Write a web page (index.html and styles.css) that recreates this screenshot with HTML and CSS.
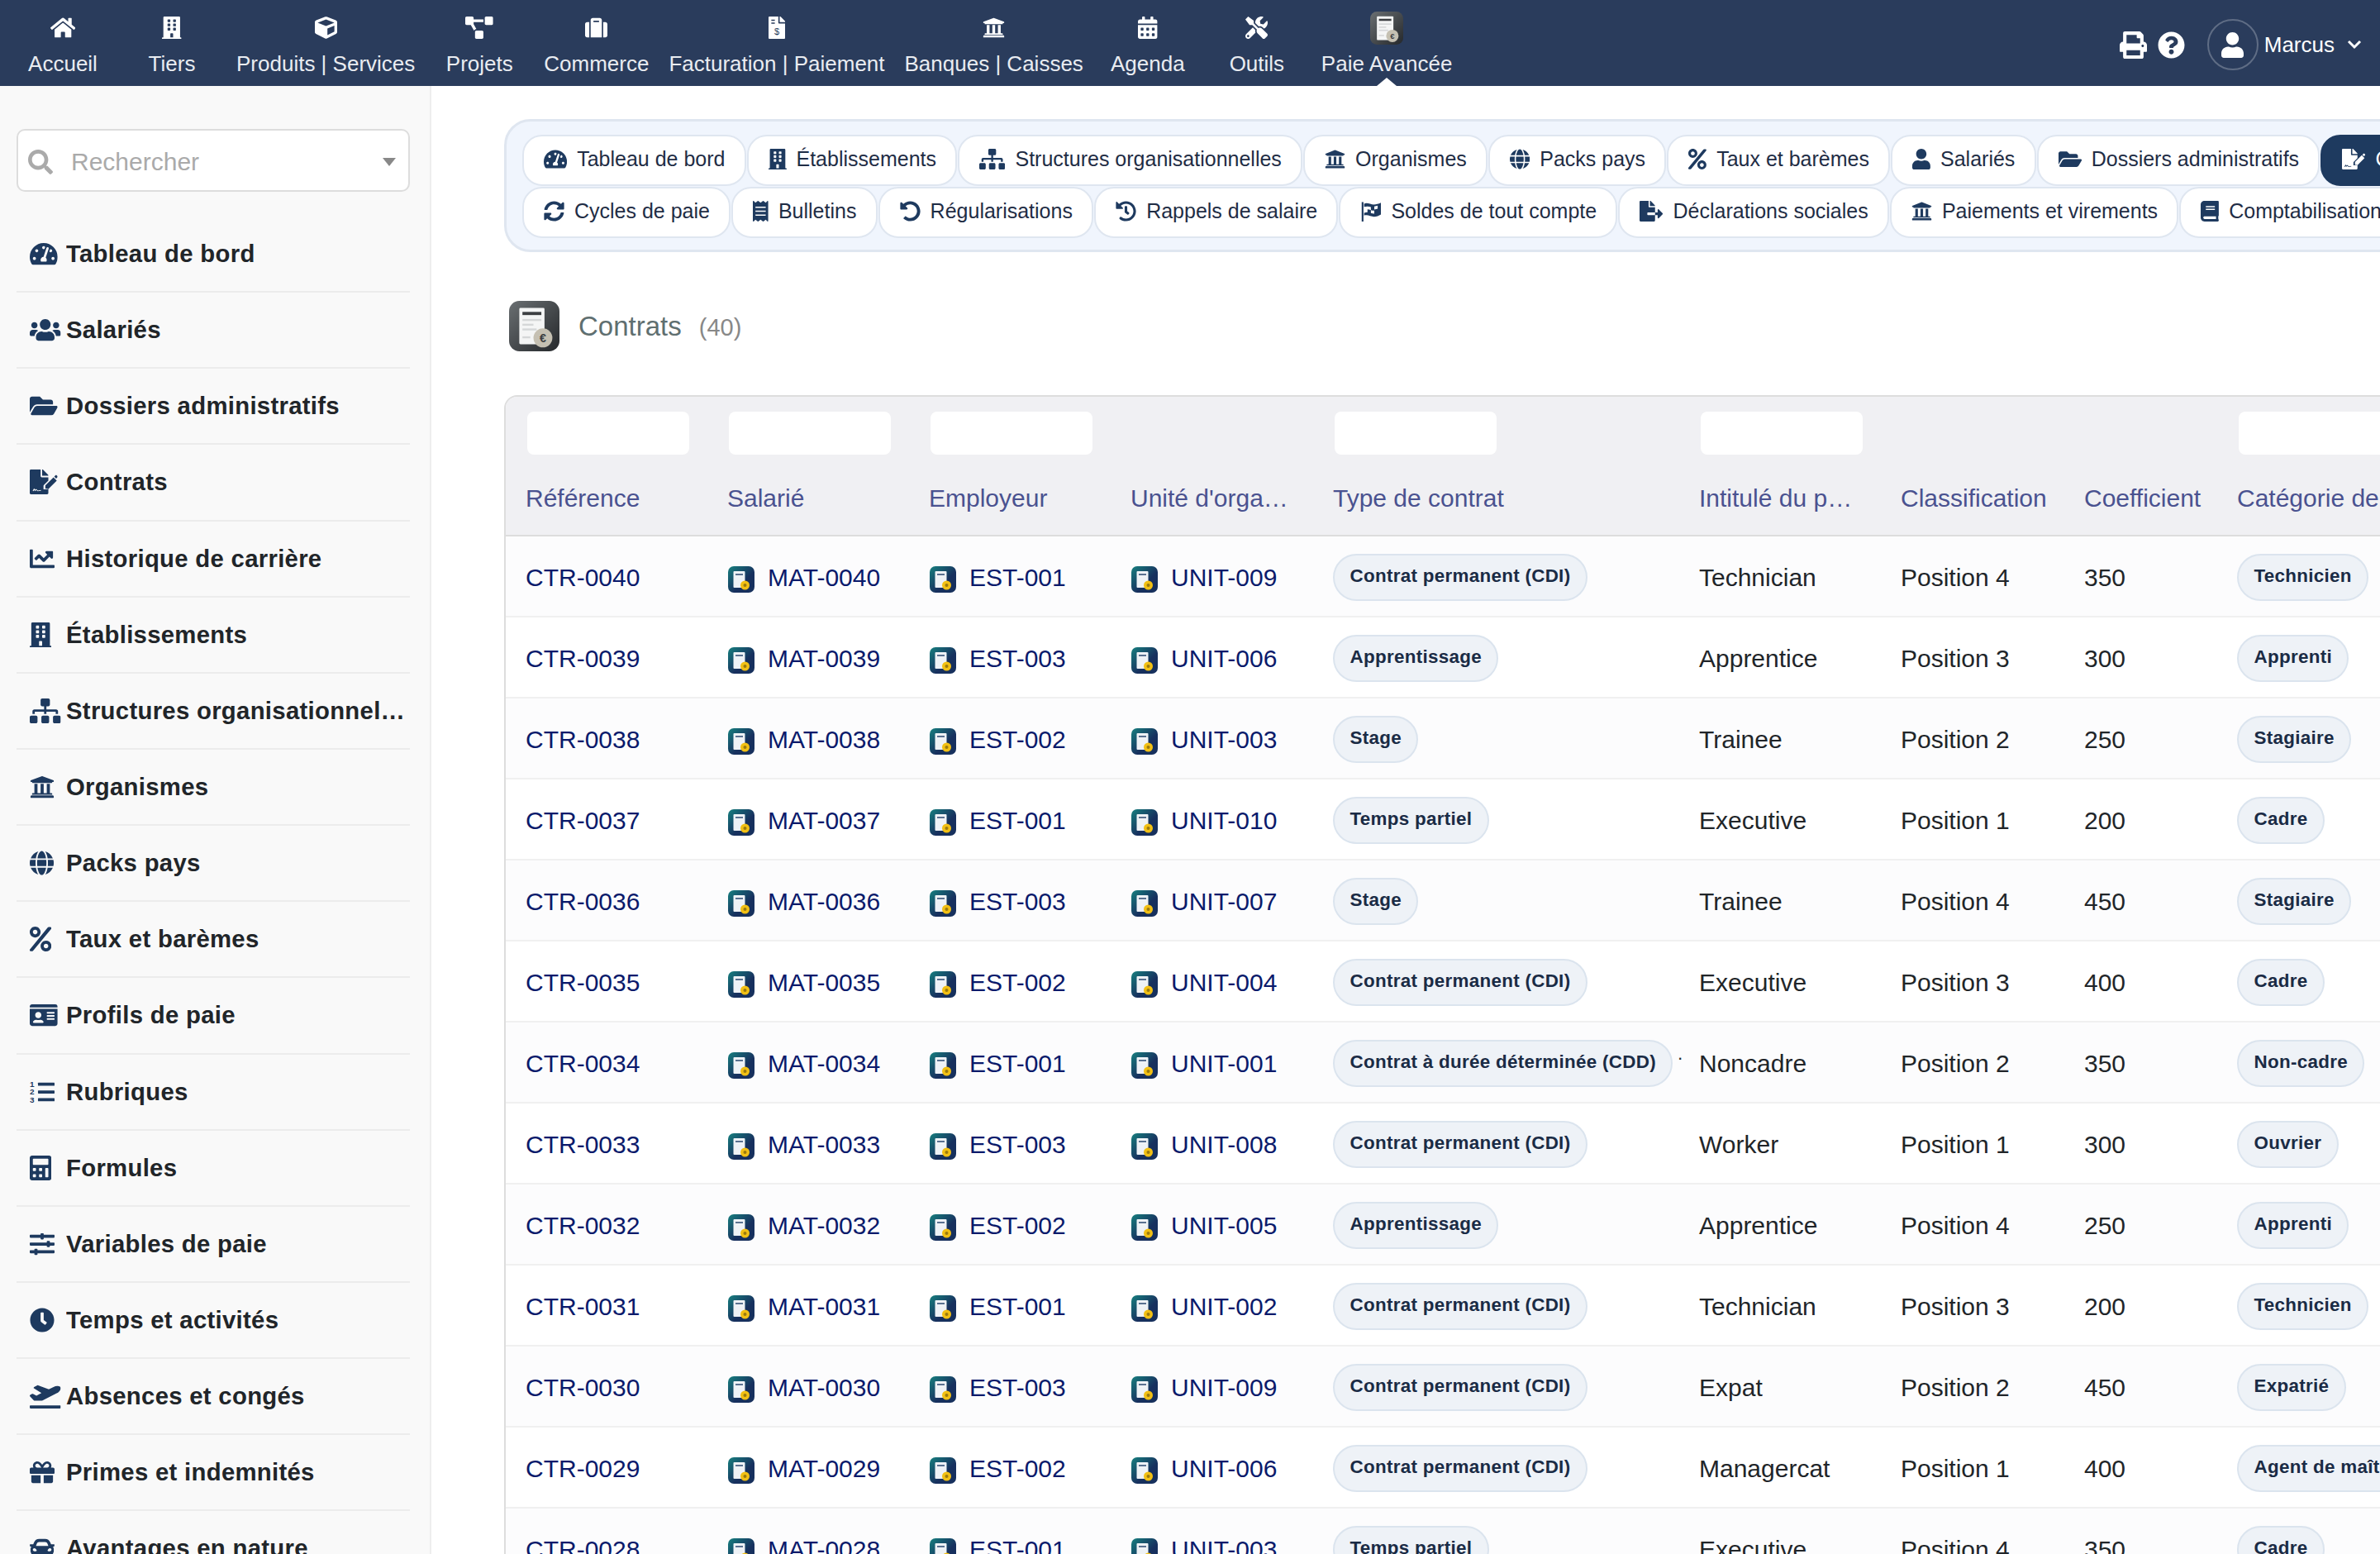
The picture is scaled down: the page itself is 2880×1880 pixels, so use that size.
FILE: index.html
```html
<!DOCTYPE html>
<html lang="fr">
<head>
  <meta charset="UTF-8">
  <title>Contrats</title>
  <link rel="stylesheet" href="styles.css">
</head>
<body>
  <svg class="sprite" xmlns="http://www.w3.org/2000/svg">
    <defs>
      <linearGradient id="appGrad" x1="0" y1="0" x2="1" y2="1"><stop offset="0" stop-color="#6a6f72"/><stop offset="1" stop-color="#25282b"/></linearGradient>
      <linearGradient id="recGrad" x1="0" y1="0" x2="1" y2="1"><stop offset="0" stop-color="#17807f"/><stop offset="0.6" stop-color="#17305e"/><stop offset="1" stop-color="#16305c"/></linearGradient>
    </defs>
    <symbol id="home" viewBox="0 0 576 512"><path d="M280.37 148.26L96 300.11V464a16 16 0 0 0 16 16l112.06-.29a16 16 0 0 0 15.92-16V368a16 16 0 0 1 16-16h64a16 16 0 0 1 16 16v95.64a16 16 0 0 0 16 16.05L464 480a16 16 0 0 0 16-16V300L295.67 148.26a12.19 12.19 0 0 0-15.3 0zM571.6 251.47L488 182.56V44.05a12 12 0 0 0-12-12h-56a12 12 0 0 0-12 12v72.61L318.47 43a48 48 0 0 0-61 0L4.34 251.47a12 12 0 0 0-1.6 16.9l25.5 31A12 12 0 0 0 45.15 301l235.22-193.74a12.19 12.19 0 0 1 15.3 0L530.9 301a12 12 0 0 0 16.9-1.6l25.5-31a12 12 0 0 0-1.7-16.93z"/></symbol>
    <symbol id="building" viewBox="0 0 448 512"><path d="M436 480h-20V24c0-13.255-10.745-24-24-24H56C42.745 0 32 10.745 32 24v456H12c-6.627 0-12 5.373-12 12v20h448v-20c0-6.627-5.373-12-12-12zM128 76c0-6.627 5.373-12 12-12h40c6.627 0 12 5.373 12 12v40c0 6.627-5.373 12-12 12h-40c-6.627 0-12-5.373-12-12V76zm0 96c0-6.627 5.373-12 12-12h40c6.627 0 12 5.373 12 12v40c0 6.627-5.373 12-12 12h-40c-6.627 0-12-5.373-12-12v-40zm52 148h-40c-6.627 0-12-5.373-12-12v-40c0-6.627 5.373-12 12-12h40c6.627 0 12 5.373 12 12v40c0 6.627-5.373 12-12 12zm76 160h-64v-84c0-6.627 5.373-12 12-12h40c6.627 0 12 5.373 12 12v84zm64-172c0 6.627-5.373 12-12 12h-40c-6.627 0-12-5.373-12-12v-40c0-6.627 5.373-12 12-12h40c6.627 0 12 5.373 12 12v40zm0-96c0 6.627-5.373 12-12 12h-40c-6.627 0-12-5.373-12-12v-40c0-6.627 5.373-12 12-12h40c6.627 0 12 5.373 12 12v40zm0-96c0 6.627-5.373 12-12 12h-40c-6.627 0-12-5.373-12-12V76c0-6.627 5.373-12 12-12h40c6.627 0 12 5.373 12 12v40z"/></symbol>
    <symbol id="cube" viewBox="0 0 512 512"><path d="M239.100 6.300l-208 78c-18.700 7-31.100 25-31.100 45v225.100c0 18.200 10.300 34.800 26.500 42.900l208 104c13.500 6.800 29.400 6.800 42.900 0l208-104c16.300-8.100 26.500-24.800 26.500-42.900V129.300c0-20-12.400-37.900-31.100-44.900l-208-78C262 2.200 250 2.200 239.100 6.300zM256 68.400l192 72v1.100l-192 78-192-78v-1.100l192-72zm32 356V275.500l160-65v133.900l-160 80z"/></symbol>
    <symbol id="diagram" viewBox="0 0 640 512"><path d="M384 320H256c-17.670 0-32 14.330-32 32v128c0 17.670 14.330 32 32 32h128c17.670 0 32-14.330 32-32V352c0-17.670-14.330-32-32-32zM192 32c0-17.670-14.330-32-32-32H32C14.330 0 0 14.330 0 32v128c0 17.670 14.330 32 32 32h95.720l73.160 128.040C211.980 300.980 232.400 288 256 288h.280L192 175.510V128h224V64H192V32zM608 0H480c-17.670 0-32 14.330-32 32v128c0 17.670 14.330 32 32 32h128c17.670 0 32-14.330 32-32V32c0-17.670-14.330-32-32-32z"/></symbol>
    <symbol id="suitcase" viewBox="0 0 512 512"><path d="M128 480h256V80c0-26.500-21.500-48-48-48H176c-26.500 0-48 21.500-48 48v400zm64-384h128v32H192V96zm320 80v256c0 26.500-21.500 48-48 48h-48V128h48c26.500 0 48 21.500 48 48zM96 480H48c-26.500 0-48-21.500-48-48V176c0-26.500 21.500-48 48-48h48v352z"/></symbol>
    <symbol id="invoice" viewBox="0 0 384 512"><path fill-rule="evenodd" d="M377 105L279.100 7c-4.500-4.500-10.600-7-17-7H256v128h128v-6.100c0-6.300-2.500-12.400-7-16.900zM224 136V0H24C10.700 0 0 10.700 0 24v464c0 13.300 10.700 24 24 24h336c13.300 0 24-10.700 24-24V160H248c-13.200 0-24-10.800-24-24zM64 72h80v28H64zM64 136h80v28H64z"/><text x="192" y="420" font-size="210" text-anchor="middle" fill="#2a3c5c" font-family="Liberation Sans, sans-serif">$</text></symbol>
    <symbol id="university" viewBox="0 0 512 512"><path d="M496 128v16a8 8 0 0 1-8 8h-24v12c0 6.627-5.373 12-12 12H60c-6.627 0-12-5.373-12-12v-12H24a8 8 0 0 1-8-8v-16a8 8 0 0 1 4.941-7.392l232-88a7.996 7.996 0 0 1 6.118 0l232 88A8 8 0 0 1 496 128zm-24 304H40c-13.255 0-24 10.745-24 24v16a8 8 0 0 0 8 8h464a8 8 0 0 0 8-8v-16c0-13.255-10.745-24-24-24zM96 192v192H60c-6.627 0-12 5.373-12 12v20h416v-20c0-6.627-5.373-12-12-12h-36V192h-64v192h-64V192h-64v192h-64V192H96z"/></symbol>
    <symbol id="calendar" viewBox="0 0 448 512"><path d="M0 464c0 26.500 21.500 48 48 48h352c26.500 0 48-21.500 48-48V192H0v272zm320-196c0-6.600 5.400-12 12-12h40c6.600 0 12 5.400 12 12v40c0 6.600-5.400 12-12 12h-40c-6.600 0-12-5.400-12-12v-40zm0 128c0-6.600 5.400-12 12-12h40c6.600 0 12 5.400 12 12v40c0 6.600-5.400 12-12 12h-40c-6.600 0-12-5.400-12-12v-40zM192 268c0-6.600 5.400-12 12-12h40c6.600 0 12 5.400 12 12v40c0 6.600-5.400 12-12 12h-40c-6.600 0-12-5.400-12-12v-40zm0 128c0-6.600 5.400-12 12-12h40c6.600 0 12 5.400 12 12v40c0 6.600-5.400 12-12 12h-40c-6.600 0-12-5.400-12-12v-40zM64 268c0-6.600 5.400-12 12-12h40c6.600 0 12 5.400 12 12v40c0 6.600-5.400 12-12 12H76c-6.600 0-12-5.400-12-12v-40zm0 128c0-6.600 5.400-12 12-12h40c6.600 0 12 5.400 12 12v40c0 6.600-5.400 12-12 12H76c-6.600 0-12-5.400-12-12v-40zM400 64h-48V16c0-8.800-7.200-16-16-16h-32c-8.800 0-16 7.200-16 16v48H160V16c0-8.800-7.200-16-16-16h-32c-8.800 0-16 7.200-16 16v48H48C21.500 64 0 85.500 0 112v48h448v-48c0-26.500-21.500-48-48-48z"/></symbol>
    <symbol id="tools" viewBox="0 0 512 512"><path d="M501.100 395.700L384 278.600c-23.100-23.100-57.600-27.600-85.400-13.900L192 158.100V96L64 0 0 64l96 128h62.100l106.600 106.600c-13.600 27.800-9.200 62.300 13.900 85.400l117.100 117.100c14.600 14.600 38.200 14.600 52.700 0l52.700-52.700c14.500-14.600 14.500-38.200 0-52.700zM331.700 225c28.300 0 54.900 11 74.900 31l19.400 19.400c15.800-6.900 30.800-16.500 43.800-29.500 37.100-37.100 49.700-89.300 37.900-136.700-2.200-9-13.500-12.100-20.100-5.500l-74.400 74.400-67.900-11.300L334 98.900l74.400-74.400c6.600-6.600 3.400-17.900-5.700-20.200-47.400-11.700-99.600.9-136.600 37.900-28.500 28.500-41.900 66.100-41.200 103.600l82.100 82.100c8.100-1.900 16.500-2.900 24.700-2.900zm-103.900 82l-56.700-56.700L18.700 402.800c-25 25-25 65.500 0 90.500s65.500 25 90.500 0l123.600-123.600c-7.600-19.900-9.900-41.600-5-62.700zM64 472c-13.200 0-24-10.800-24-24 0-13.300 10.700-24 24-24s24 10.700 24 24c0 13.200-10.700 24-24 24z"/></symbol>
    <symbol id="print" viewBox="0 0 512 512"><path d="M448 192V77.250c0-8.490-3.370-16.620-9.370-22.630L393.370 9.370c-6-6-14.140-9.370-22.630-9.370H96C78.330 0 64 14.330 64 32v160c-35.350 0-64 28.650-64 64v112c0 8.840 7.160 16 16 16h48v96c0 17.670 14.330 32 32 32h320c17.670 0 32-14.330 32-32v-96h48c8.840 0 16-7.160 16-16V256c0-35.350-28.650-64-64-64zm-64 256H128v-96h256v96zm0-224H128V64h192v48c0 8.840 7.160 16 16 16h48v96zm48 72c-13.250 0-24-10.750-24-24 0-13.260 10.750-24 24-24s24 10.740 24 24c0 13.250-10.750 24-24 24z"/></symbol>
    <symbol id="question" viewBox="0 0 512 512"><path d="M504 256c0 136.997-111.043 248-248 248S8 392.997 8 256C8 119.083 119.043 8 256 8s248 111.083 248 248zM262.655 90c-54.497 0-89.255 22.957-116.549 63.758-3.536 5.286-2.353 12.415 2.715 16.258l34.699 26.310c5.205 3.947 12.621 3.008 16.665-2.122 17.864-22.658 30.113-35.797 57.303-35.797 20.429 0 45.698 13.148 45.698 32.958 0 14.976-12.363 22.667-32.534 33.976C247.128 238.528 216 254.941 216 296v4c0 6.627 5.373 12 12 12h56c6.627 0 12-5.373 12-12v-1.333c0-28.462 83.186-29.647 83.186-106.667 0-58.002-60.165-102-116.531-102zM256 338c-25.365 0-46 20.635-46 46 0 25.364 20.635 46 46 46s46-20.636 46-46c0-25.365-20.635-46-46-46z"/></symbol>
    <symbol id="user" viewBox="0 0 448 512"><path d="M224 256c70.700 0 128-57.300 128-128S294.700 0 224 0 96 57.300 96 128s57.300 128 128 128zm89.600 32h-16.700c-22.200 10.200-46.900 16-72.900 16s-50.600-5.800-72.900-16h-16.700C60.200 288 0 348.200 0 422.400V464c0 26.500 21.500 48 48 48h352c26.500 0 48-21.500 48-48v-41.600c0-74.200-60.200-134.400-134.400-134.400z"/></symbol>
    <symbol id="search" viewBox="0 0 512 512"><path d="M505 442.700L405.300 343c-4.500-4.500-10.600-7-17-7H372c27.600-35.300 44-79.700 44-128C416 93.100 322.900 0 208 0S0 93.100 0 208s93.100 208 208 208c48.300 0 92.700-16.400 128-44v16.300c0 6.400 2.500 12.500 7 17l99.700 99.700c9.400 9.400 24.600 9.400 33.900 0l28.300-28.300c9.400-9.400 9.400-24.600.1-34zM208 336c-70.700 0-128-57.200-128-128 0-70.700 57.200-128 128-128 70.700 0 128 57.200 128 128 0 70.700-57.200 128-128 128z"/></symbol>
    <symbol id="gauge" viewBox="0 0 576 512"><path d="M288 32C128.940 32 0 160.940 0 320c0 52.800 14.250 102.260 39.060 144.800 5.610 9.620 16.300 15.200 27.440 15.200h443c11.140 0 21.830-5.580 27.440-15.200C561.750 422.260 576 372.800 576 320c0-159.060-128.940-288-288-288zm0 64c14.710 0 26.580 10.130 30.320 23.650-1.110 2.260-2.640 4.230-3.450 6.670l-9.220 27.670c-5.130 3.490-10.970 6.010-17.640 6.010-17.670 0-32-14.330-32-32S270.330 96 288 96zM96 384c-17.670 0-32-14.330-32-32s14.330-32 32-32 32 14.330 32 32-14.330 32-32 32zm48-160c-17.670 0-32-14.330-32-32s14.330-32 32-32 32 14.330 32 32-14.330 32-32 32zm246.770-72.410l-61.330 184C343.130 347.330 352 364.540 352 384c0 11.720-3.380 22.550-8.880 32H232.880c-5.500-9.450-8.880-20.280-8.880-32 0-33.940 26.500-61.430 59.900-63.590l61.340-184.010c4.170-12.560 17.730-19.450 30.360-15.170 12.570 4.190 19.350 17.770 15.170 30.360zm14.660 57.200l15.520-46.550c3.470-1.290 7.130-2.230 11.050-2.230 17.670 0 32 14.330 32 32s-14.330 32-32 32c-11.380-.01-20.890-6.280-26.570-15.220zM480 384c-17.670 0-32-14.330-32-32s14.330-32 32-32 32 14.330 32 32-14.330 32-32 32z"/></symbol>
    <symbol id="users" viewBox="0 0 640 512"><path d="M96 224c35.300 0 64-28.700 64-64s-28.700-64-64-64-64 28.700-64 64 28.700 64 64 64zm448 0c35.300 0 64-28.700 64-64s-28.700-64-64-64-64 28.700-64 64 28.700 64 64 64zm32 32h-64c-17.600 0-33.500 7.100-45.100 18.600 40.300 22.100 68.900 62 75.100 109.400h66c17.700 0 32-14.300 32-32v-32c0-35.300-28.700-64-64-64zm-256 0c61.900 0 112-50.100 112-112S381.900 32 320 32 208 82.100 208 144s50.100 112 112 112zm76.800 32h-8.300c-20.800 10-43.900 16-68.500 16s-47.600-6-68.500-16h-8.300C179.600 288 128 339.600 128 403.200V432c0 26.500 21.500 48 48 48h288c26.500 0 48-21.500 48-48v-28.800c0-63.600-51.600-115.200-115.200-115.200zm-223.700-13.400C161.500 263.100 145.600 256 128 256H64c-35.300 0-64 28.700-64 64v32c0 17.700 14.300 32 32 32h65.900c6.300-47.400 34.900-87.300 75.200-109.400z"/></symbol>
    <symbol id="folder" viewBox="0 0 576 512"><path d="M572.694 292.093L500.270 416.248A63.997 63.997 0 0 1 444.989 448H45.025c-18.523 0-30.064-20.093-20.731-36.093l72.424-124.155A64 64 0 0 1 152 256h399.964c18.523 0 30.064 20.093 20.730 36.093zM152 224h328v-48c0-26.510-21.490-48-48-48H272l-64-64H48C21.490 64 0 85.490 0 112v278.046l69.077-118.418C86.214 242.250 117.989 224 152 224z"/></symbol>
    <symbol id="signature" viewBox="0 0 576 512"><path fill-rule="evenodd" d="M0 24C0 10.700 10.700 0 24 0h200v136c0 13.200 10.800 24 24 24h136v69L292 320c-5 5-8 12-8 19v70h70c7 0 14-3 19-8l11-11v98c0 13.300-10.700 24-24 24H24c-13.300 0-24-10.700-24-24zM60 440l30-50 20 30 20-20 40 34 60-10v16l-66 10-32-26-22 22-16-22-18 26z"/><path d="M256 0h6.100c6.400 0 12.500 2.500 17 7l97.900 98c4.500 4.500 7 10.600 7 16.900v6.100H256zM322 329L490 161l68 68-168 168h-68zM505 146l24-24c8-8 20-8 28 0l12 12c8 8 8 20 0 28l-24 24z"/></symbol>
    <symbol id="chart" viewBox="0 0 512 512"><path d="M496 384H64V80c0-8.840-7.160-16-16-16H16C7.160 64 0 71.160 0 80v336c0 17.670 14.330 32 32 32h464c8.840 0 16-7.160 16-16v-32c0-8.840-7.160-16-16-16zM464 96H345.940c-21.380 0-32.090 25.850-16.970 40.970l32.400 32.400L288 242.750l-73.370-73.370c-12.500-12.500-32.760-12.500-45.250 0l-68.690 68.690c-6.250 6.250-6.250 16.380 0 22.630l22.620 22.620c6.250 6.250 16.380 6.250 22.630 0L192 237.250l73.370 73.370c12.500 12.500 32.760 12.500 45.250 0l96-96 32.400 32.400c15.120 15.120 40.970 4.410 40.970-16.970V112c.01-8.840-7.150-16-15.990-16z"/></symbol>
    <symbol id="sitemap" viewBox="0 0 640 512"><path d="M128 352H32c-17.670 0-32 14.330-32 32v96c0 17.670 14.330 32 32 32h96c17.670 0 32-14.330 32-32v-96c0-17.670-14.330-32-32-32zm-24-80h192v48h48v-48h192v48h48v-57.590c0-21.170-17.230-38.410-38.410-38.410H344v-64h40c17.670 0 32-14.330 32-32V32c0-17.670-14.330-32-32-32H256c-17.670 0-32 14.330-32 32v96c0 17.670 14.330 32 32 32h40v64H94.410C73.230 224 56 241.230 56 262.410V320h48v-48zm264 80h-96c-17.670 0-32 14.330-32 32v96c0 17.670 14.330 32 32 32h96c17.670 0 32-14.330 32-32v-96c0-17.670-14.330-32-32-32zm240 0h-96c-17.670 0-32 14.330-32 32v96c0 17.670 14.330 32 32 32h96c17.670 0 32-14.330 32-32v-96c0-17.670-14.330-32-32-32z"/></symbol>
    <symbol id="globe" viewBox="0 0 496 512"><path d="M336.500 160C322 70.700 287.800 8 248 8s-74 62.700-88.500 152h177zM152 256c0 22.200 1.200 43.500 3.300 64h185.300c2.100-20.500 3.300-41.800 3.300-64s-1.200-43.500-3.300-64H155.300c-2.100 20.500-3.300 41.800-3.300 64zm324.700-96c-28.600-67.900-86.500-120.400-158-141.600 24.400 33.800 41.200 84.700 50 141.600h108zM177.200 18.400C105.800 39.600 47.800 92.100 19.300 160h108c8.700-56.900 25.500-107.800 49.900-141.600zM487.400 192H372.700c2.100 21 3.300 42.500 3.300 64s-1.200 43-3.300 64h114.600c5.500-20.500 8.600-41.800 8.600-64s-3.100-43.500-8.500-64zM120 256c0-21.500 1.200-43 3.300-64H8.600C3.200 212.500 0 233.800 0 256s3.200 43.500 8.600 64h114.600c-2-21-3.200-42.500-3.200-64zm39.500 96c14.500 89.300 48.700 152 88.500 152s74-62.700 88.500-152h-177zm159.300 141.600c71.400-21.200 129.400-73.700 158-141.600h-108c-8.800 56.900-25.600 107.800-50 141.600zM19.300 352c28.600 67.900 86.500 120.400 158 141.600-24.400-33.800-41.200-84.700-50-141.600h-108z"/></symbol>
    <symbol id="percent" viewBox="0 0 448 512"><path d="M112 224c61.900 0 112-50.100 112-112S173.900 0 112 0 0 50.100 0 112s50.100 112 112 112zm0-160c26.500 0 48 21.500 48 48s-21.500 48-48 48-48-21.500-48-48 21.500-48 48-48zm224 224c-61.900 0-112 50.100-112 112s50.100 112 112 112 112-50.100 112-112-50.100-112-112-112zm0 160c-26.500 0-48-21.500-48-48s21.500-48 48-48 48 21.500 48 48-21.500 48-48 48zM392 8h32c19.500 0 30.900 21.900 19.700 37.800L72 496c-4.500 6.400-11.800 10.200-19.600 10.200H24c-19.500 0-30.900-21.900-19.700-37.800L372.400 18.200C376.900 11.800 384.200 8 392 8z"/></symbol>
    <symbol id="idcard" viewBox="0 0 576 512"><path d="M528 32H48C21.500 32 0 53.500 0 80v16h576V80c0-26.500-21.500-48-48-48zM0 432c0 26.500 21.500 48 48 48h480c26.500 0 48-21.500 48-48V128H0v304zm352-232c0-4.400 3.600-8 8-8h144c4.400 0 8 3.600 8 8v16c0 4.400-3.600 8-8 8H360c-4.400 0-8-3.600-8-8v-16zm0 64c0-4.400 3.600-8 8-8h144c4.400 0 8 3.600 8 8v16c0 4.400-3.600 8-8 8H360c-4.400 0-8-3.600-8-8v-16zm0 64c0-4.400 3.600-8 8-8h144c4.400 0 8 3.600 8 8v16c0 4.400-3.600 8-8 8H360c-4.400 0-8-3.600-8-8v-16zM176 192c35.300 0 64 28.700 64 64s-28.700 64-64 64-64-28.700-64-64 28.700-64 64-64zM67.100 396.200C75.500 370.500 99.600 352 128 352h8.200c12.300 5.100 25.700 8 39.800 8s27.600-2.900 39.800-8h8.200c28.400 0 52.500 18.500 60.900 44.200 3.200 9.900-5.200 19.800-15.600 19.800H82.700c-10.400 0-18.800-10-15.600-19.800z"/></symbol>
    <symbol id="listol" viewBox="0 0 512 512"><rect x="170" y="64" width="342" height="64" rx="10"/><rect x="170" y="224" width="342" height="64" rx="10"/><rect x="170" y="384" width="342" height="64" rx="10"/><text x="48" y="150" font-size="170" font-weight="700" text-anchor="middle" font-family="Liberation Sans, sans-serif">1</text><text x="48" y="310" font-size="170" font-weight="700" text-anchor="middle" font-family="Liberation Sans, sans-serif">2</text><text x="48" y="470" font-size="170" font-weight="700" text-anchor="middle" font-family="Liberation Sans, sans-serif">3</text></symbol>
    <symbol id="calculator" viewBox="0 0 448 512"><path d="M400 0H48C22.400 0 0 22.400 0 48v416c0 25.600 22.400 48 48 48h352c25.600 0 48-22.400 48-48V48c0-25.600-22.400-48-48-48zM128 435.200c0 6.400-6.400 12.800-12.800 12.800H76.800c-6.400 0-12.800-6.400-12.800-12.800v-38.400c0-6.400 6.400-12.800 12.800-12.800h38.400c6.400 0 12.800 6.400 12.800 12.800v38.400zm0-128c0 6.400-6.400 12.800-12.800 12.800H76.800c-6.400 0-12.800-6.400-12.800-12.800v-38.400c0-6.400 6.400-12.800 12.800-12.800h38.400c6.400 0 12.800 6.400 12.800 12.800v38.400zm128 128c0 6.400-6.400 12.800-12.800 12.800h-38.400c-6.400 0-12.800-6.400-12.800-12.800v-38.400c0-6.400 6.400-12.800 12.800-12.800h38.400c6.400 0 12.800 6.400 12.800 12.800v38.400zm0-128c0 6.400-6.400 12.800-12.800 12.800h-38.400c-6.400 0-12.800-6.400-12.800-12.800v-38.400c0-6.400 6.400-12.800 12.800-12.800h38.400c6.400 0 12.800 6.400 12.800 12.800v38.400zm128 128c0 6.400-6.400 12.800-12.800 12.800h-38.400c-6.400 0-12.800-6.400-12.800-12.800V268.800c0-6.400 6.400-12.800 12.800-12.800h38.400c6.400 0 12.800 6.400 12.800 12.800v166.400zm0-256c0 6.400-6.400 12.800-12.800 12.800H76.800c-6.400 0-12.800-6.400-12.800-12.800V76.800C64 70.400 70.400 64 76.800 64h294.400c6.400 0 12.800 6.400 12.800 12.800v102.400z"/></symbol>
    <symbol id="sliders" viewBox="0 0 512 512"><path d="M496 384H160v-16c0-8.800-7.200-16-16-16h-32c-8.800 0-16 7.200-16 16v16H16c-8.800 0-16 7.200-16 16v32c0 8.800 7.200 16 16 16h80v16c0 8.800 7.200 16 16 16h32c8.800 0 16-7.200 16-16v-16h336c8.800 0 16-7.200 16-16v-32c0-8.800-7.200-16-16-16zm0-160h-80v-16c0-8.800-7.200-16-16-16h-32c-8.800 0-16 7.200-16 16v16H16c-8.800 0-16 7.200-16 16v32c0 8.800 7.200 16 16 16h336v16c0 8.800 7.200 16 16 16h32c8.800 0 16-7.200 16-16v-16h80c8.800 0 16-7.200 16-16v-32c0-8.800-7.200-16-16-16zm0-160H288V48c0-8.800-7.200-16-16-16h-32c-8.800 0-16 7.200-16 16v16H16C7.200 64 0 71.200 0 80v32c0 8.800 7.200 16 16 16h208v16c0 8.800 7.200 16 16 16h32c8.800 0 16-7.200 16-16v-16h208c8.800 0 16-7.200 16-16V80c0-8.800-7.200-16-16-16z"/></symbol>
    <symbol id="clock" viewBox="0 0 512 512"><path d="M256 8C119 8 8 119 8 256s111 248 248 248 248-111 248-248S393 8 256 8zm92.490 313l-20 25a16 16 0 0 1-22.490 2.500l-67-49.720a40 40 0 0 1-15-31.230V112a16 16 0 0 1 16-16h32a16 16 0 0 1 16 16v144l58 42.500a16 16 0 0 1 2.490 22.500z"/></symbol>
    <symbol id="plane" viewBox="0 0 640 512"><path d="M624 448H16c-8.840 0-16 7.160-16 16v32c0 8.840 7.160 16 16 16h608c8.840 0 16-7.160 16-16v-32c0-8.840-7.160-16-16-16zM80.550 341.270c6.280 6.840 15.100 10.720 24.330 10.710l130.540-.18a65.620 65.620 0 0 0 29.640-7.120l290.960-147.650c26.740-13.570 50.710-32.940 67.020-58.310 18.310-28.480 20.300-49.090 13.070-63.650-7.210-14.570-24.740-25.270-58.250-27.450-29.850-1.940-59.540 5.920-86.280 19.480l-98.510 49.990-218.710-82.060a17.800 17.800 0 0 0-18-1.110L90.620 67.290c-10.670 5.410-13.250 19.650-5.170 28.530l156.220 98.100-103.210 52.380-72.350-36.470a17.800 17.800 0 0 0-16.070.02L9.910 230.220c-10.440 5.300-13.190 19.120-5.570 28.080l76.210 82.970z"/></symbol>
    <symbol id="gift" viewBox="0 0 512 512"><path d="M32 448c0 17.700 14.300 32 32 32h160V320H32v128zm256 32h160c17.700 0 32-14.300 32-32V320H288v160zm192-320h-42.100c6.200-12.100 10.100-25.500 10.100-40 0-48.500-39.500-88-88-88-41.600 0-68.500 21.300-103 68.300-34.500-47-61.400-68.300-103-68.300-48.500 0-88 39.500-88 88 0 14.500 3.800 27.900 10.100 40H32c-17.700 0-32 14.300-32 32v80c0 8.800 7.200 16 16 16h480c8.800 0 16-7.200 16-16v-80c0-17.700-14.300-32-32-32zm-326.100 0c-22.100 0-40-17.900-40-40s17.900-40 40-40c19.900 0 34.600 3.300 86.100 80h-86.100zm206.100 0h-86.100c51.400-76.500 65.700-80 86.100-80 22.100 0 40 17.900 40 40s-17.900 40-40 40z"/></symbol>
    <symbol id="car" viewBox="0 0 512 512"><path d="M499.990 176h-59.870l-16.640-41.600C406.380 91.630 365.570 64 319.500 64h-127c-46.060 0-86.880 27.630-103.990 70.400L71.870 176H12.010C4.200 176-1.530 183.340.37 190.910l6 24C7.700 220.250 12.500 224 18.010 224h20.070C24.650 235.730 16 252.780 16 272v48c0 16.120 6.160 30.670 16 41.930V416c0 17.670 14.330 32 32 32h32c17.670 0 32-14.330 32-32v-32h256v32c0 17.670 14.330 32 32 32h32c17.670 0 32-14.330 32-32v-54.070c9.840-11.250 16-25.800 16-41.930v-48c0-19.220-8.650-36.270-22.070-48H494c5.510 0 10.310-3.750 11.640-9.090l6-24c1.890-7.570-3.840-14.910-11.650-14.910zm-352.060-17.830c7.290-18.220 24.940-30.170 44.570-30.170h127c19.630 0 37.280 11.950 44.570 30.170L384 208H128l19.930-49.830zM96 319.800c-19.200 0-32-12.760-32-31.900S76.800 256 96 256s48 28.710 48 47.850-28.800 15.950-48 15.950zm320 0c-19.200 0-48 3.190-48-15.950S396.800 256 416 256s32 12.760 32 31.900-12.800 31.900-32 31.900z"/></symbol>
    <symbol id="sync" viewBox="0 0 512 512"><path d="M370.720 133.280C339.458 104.008 298.888 87.962 255.848 88c-77.458.068-144.328 53.178-162.791 126.850-1.344 5.363-6.122 9.150-11.651 9.150H24.103c-7.498 0-13.194-6.807-11.807-14.176C33.933 94.924 134.813 8 256 8c66.448 0 126.791 26.136 171.315 68.685L463.030 40.970C478.149 25.851 504 36.559 504 57.941V192c0 13.255-10.745 24-24 24H345.941c-21.382 0-32.090-25.851-16.971-40.971l41.750-41.749zM32 296h134.059c21.382 0 32.090 25.851 16.971 40.971l-41.750 41.750c31.262 29.273 71.835 45.319 114.876 45.280 77.418-.07 144.315-53.144 162.787-126.849 1.344-5.363 6.122-9.150 11.651-9.150h57.304c7.498 0 13.194 6.807 11.807 14.176C478.067 417.076 377.187 504 256 504c-66.448 0-126.791-26.136-171.315-68.685L48.970 471.030C33.851 486.149 8 475.441 8 454.059V320c0-13.255 10.745-24 24-24z"/></symbol>
    <symbol id="receipt" viewBox="0 0 384 512"><path d="M358.400 3.200L320 48 265.600 3.200a15.900 15.900 0 0 0-19.200 0L192 48 137.600 3.200a15.900 15.900 0 0 0-19.200 0L64 48 25.600 3.200C15-4.700 0 2.800 0 16v480c0 13.200 15 20.700 25.600 12.800L64 464l54.400 44.800a15.900 15.900 0 0 0 19.200 0L192 464l54.400 44.800a15.900 15.900 0 0 0 19.200 0L320 464l38.400 44.800c10.500 7.900 25.600.4 25.600-12.800V16c0-13.200-15-20.700-25.600-12.800zM320 360c0 4.400-3.600 8-8 8H72c-4.400 0-8-3.600-8-8v-16c0-4.400 3.600-8 8-8h240c4.400 0 8 3.600 8 8v16zm0-96c0 4.400-3.600 8-8 8H72c-4.400 0-8-3.600-8-8v-16c0-4.400 3.600-8 8-8h240c4.400 0 8 3.600 8 8v16zm0-96c0 4.400-3.600 8-8 8H72c-4.400 0-8-3.600-8-8v-16c0-4.400 3.600-8 8-8h240c4.400 0 8 3.600 8 8v16z"/></symbol>
    <symbol id="undo" viewBox="0 0 512 512"><path d="M255.545 8c-66.269.119-126.438 26.233-170.853 68.685L48.971 40.971C33.851 25.851 8 36.559 8 57.941V192c0 13.255 10.745 24 24 24h134.059c21.382 0 32.090-25.851 16.971-40.971l-41.750-41.750c30.864-28.899 70.801-44.907 113.240-45.273 92.410-.798 170.310 73.990 169.511 169.560C423.270 346.770 349.560 424 256 424c-41.020 0-79.790-14.640-110.270-41.470-4.740-4.170-11.900-3.920-16.360.54l-39.660 39.660c-4.870 4.870-4.630 12.810.48 17.430C134.130 480.200 192.330 504 256 504c136.970 0 248-111.030 248-248 0-136.810-111.650-248.250-248.455-248z"/></symbol>
    <symbol id="history" viewBox="0 0 512 512"><path d="M504 255.531c.253 136.640-111.180 248.372-247.820 248.468-59.015.042-113.223-20.530-155.822-54.911-11.077-8.940-11.905-25.541-1.839-35.607l11.267-11.267c8.609-8.609 22.353-9.551 31.891-1.984C173.062 425.135 212.781 440 256 440c101.705 0 184-82.311 184-184 0-101.705-82.311-184-184-184-48.814 0-93.149 18.969-126.068 49.932l50.754 50.754c10.080 10.080 2.941 27.314-11.313 27.314H24c-8.837 0-16-7.163-16-16V38.627c0-14.254 17.234-21.393 27.314-11.314l49.372 49.372C129.209 34.136 189.552 8 256 8c136.810 0 247.747 110.780 248 247.531zm-180.912 78.784l9.823-12.630c8.138-10.463 6.253-25.542-4.210-33.679L288 256.349V152c0-13.255-10.745-24-24-24h-16c-13.255 0-24 10.745-24 24v135.651l65.409 50.874c10.463 8.137 25.541 6.253 33.679-4.210z"/></symbol>
    <symbol id="flag" viewBox="0 0 512 512"><path d="M36 30h44v482H36z"/><path fill-rule="evenodd" d="M96 70c80-36 160 24 240 24 60 0 120-20 176-46v292c-50 34-110 52-172 52-80 0-164-60-244-26zM96 150v78c30-10 56-14 84-16v-76c-28 2-54 6-84 14zm84-14v76c30 0 58 8 84 16v-76c-26-8-54-16-84-16zm84 92v76c28 8 56 14 84 14v-76c-28 0-56-6-84-14zm84-92v78c30 0 60-8 84-18v-78c-26 10-54 18-84 18zM96 228v70c30-10 56-14 84-14v-72c-28 2-54 6-84 16z"/></symbol>
    <symbol id="fileexport" viewBox="0 0 576 512"><path d="M384 121.900c0-6.300-2.500-12.400-7-16.900L279.100 7c-4.500-4.500-10.600-7-17-7H256v128h128zM571 308l-95.700-96.400c-10.100-10.100-27.400-3-27.400 11.300V288h-64v64h64v65.200c0 14.300 17.300 21.400 27.400 11.300L571 332c6.600-6.600 6.600-17.400 0-24zm-379 28v-32c0-8.800 7.200-16 16-16h176V160H248c-13.200 0-24-10.800-24-24V0H24C10.700 0 0 10.700 0 24v464c0 13.300 10.700 24 24 24h336c13.300 0 24-10.700 24-24V352H208c-8.800 0-16-7.200-16-16z"/></symbol>
    <symbol id="book" viewBox="0 0 448 512"><path d="M448 360V24c0-13.300-10.700-24-24-24H96C43 0 0 43 0 96v320c0 53 43 96 96 96h328c13.300 0 24-10.700 24-24v-16c0-7.500-3.500-14.300-8.900-18.700-4.200-15.400-4.200-59.300 0-74.700 5.400-4.300 8.900-11.100 8.900-18.600zM128 134c0-3.300 2.700-6 6-6h212c3.300 0 6 2.700 6 6v20c0 3.300-2.700 6-6 6H134c-3.300 0-6-2.700-6-6v-20zm0 64c0-3.300 2.700-6 6-6h212c3.300 0 6 2.700 6 6v20c0 3.300-2.700 6-6 6H134c-3.300 0-6-2.700-6-6v-20zm253.400 250H96c-17.700 0-32-14.300-32-32 0-17.600 14.400-32 32-32h285.400c-1.900 17.100-1.900 46.900 0 64z"/></symbol>
    <symbol id="appicon" viewBox="0 0 64 64">
      <rect width="64" height="64" rx="13" fill="url(#appGrad)"/>
      <rect x="13" y="9" width="32" height="46" rx="1.500" fill="#f4f5f5"/>
      <rect x="17" y="14" width="24" height="4" fill="#3c3f42"/>
      <rect x="17" y="23" width="24" height="2.500" fill="#d5d7d8"/>
      <rect x="17" y="29" width="14" height="2.500" fill="#d5d7d8"/>
      <rect x="17" y="35" width="18" height="2.500" fill="#d5d7d8"/>
      <rect x="17" y="45" width="10" height="2.500" fill="#d5d7d8"/>
      <circle cx="43" cy="47" r="12" fill="#c5c0b2"/>
      <text x="43" y="52.500" font-size="15" font-weight="700" text-anchor="middle" fill="#3c3f42" font-family="Liberation Sans, sans-serif">€</text>
    </symbol>
    <symbol id="recicon" viewBox="0 0 32 32">
      <rect width="32" height="32" rx="7" fill="url(#recGrad)"/>
      <rect x="6.500" y="6" width="14" height="20" rx="1" fill="#eef2f6"/>
      <rect x="9" y="9" width="9" height="2" fill="#5a7190"/>
      <circle cx="20.500" cy="23" r="5.500" fill="#f2c014"/>
      <circle cx="20.500" cy="23" r="2" fill="#9a7a10"/>
    </symbol>
  </svg>

  <header class="topbar">
    <nav class="topnav">
      <a class="nav-item"><span class="nav-icon"><svg class="ic w576"><use href="#home"/></svg></span><span>Accueil</span></a>
      <a class="nav-item"><span class="nav-icon"><svg class="ic w448"><use href="#building"/></svg></span><span>Tiers</span></a>
      <a class="nav-item"><span class="nav-icon"><svg class="ic w512"><use href="#cube"/></svg></span><span>Produits | Services</span></a>
      <a class="nav-item"><span class="nav-icon"><svg class="ic w640"><use href="#diagram"/></svg></span><span>Projets</span></a>
      <a class="nav-item"><span class="nav-icon"><svg class="ic w512"><use href="#suitcase"/></svg></span><span>Commerce</span></a>
      <a class="nav-item"><span class="nav-icon"><svg class="ic w384"><use href="#invoice"/></svg></span><span>Facturation | Paiement</span></a>
      <a class="nav-item"><span class="nav-icon"><svg class="ic w512"><use href="#university"/></svg></span><span>Banques | Caisses</span></a>
      <a class="nav-item"><span class="nav-icon"><svg class="ic w448"><use href="#calendar"/></svg></span><span>Agenda</span></a>
      <a class="nav-item"><span class="nav-icon"><svg class="ic w512"><use href="#tools"/></svg></span><span>Outils</span></a>
      <a class="nav-item active"><span class="nav-icon"><svg class="app-nav"><use href="#appicon"/></svg></span><span>Paie Avancée</span></a>
    </nav>
    <div class="top-tools">
      <svg class="tool-ic tool-print"><use href="#print"/></svg>
      <svg class="tool-ic"><use href="#question"/></svg>
      <span class="avatar"><svg class="avatar-ic"><use href="#user"/></svg></span>
      <span class="username">Marcus</span>
      <svg class="chevron" viewBox="0 0 18 12"><path d="M2 2l7 7 7-7" fill="none" stroke="currentColor" stroke-width="3"/></svg>
    </div>
  </header>

  <div class="layout">
    <aside class="sidebar">
      <div class="side-search">
        <svg class="search-ic"><use href="#search"/></svg>
        <span class="search-text">Rechercher</span>
        <span class="search-arrow"></span>
      </div>
      <ul class="side-menu">
        <li><span class="side-icon"><svg class="ic w576"><use href="#gauge"/></svg></span><span class="side-label">Tableau de bord</span></li>
        <li><span class="side-icon"><svg class="ic w640"><use href="#users"/></svg></span><span class="side-label">Salariés</span></li>
        <li><span class="side-icon"><svg class="ic w576"><use href="#folder"/></svg></span><span class="side-label">Dossiers administratifs</span></li>
        <li><span class="side-icon"><svg class="ic w576"><use href="#signature"/></svg></span><span class="side-label">Contrats</span></li>
        <li><span class="side-icon"><svg class="ic w512"><use href="#chart"/></svg></span><span class="side-label">Historique de carrière</span></li>
        <li><span class="side-icon"><svg class="ic w448"><use href="#building"/></svg></span><span class="side-label">Établissements</span></li>
        <li><span class="side-icon"><svg class="ic w640"><use href="#sitemap"/></svg></span><span class="side-label">Structures organisationnelles</span></li>
        <li><span class="side-icon"><svg class="ic w512"><use href="#university"/></svg></span><span class="side-label">Organismes</span></li>
        <li><span class="side-icon"><svg class="ic w496"><use href="#globe"/></svg></span><span class="side-label">Packs pays</span></li>
        <li><span class="side-icon"><svg class="ic w448"><use href="#percent"/></svg></span><span class="side-label">Taux et barèmes</span></li>
        <li><span class="side-icon"><svg class="ic w576"><use href="#idcard"/></svg></span><span class="side-label">Profils de paie</span></li>
        <li><span class="side-icon"><svg class="ic w512"><use href="#listol"/></svg></span><span class="side-label">Rubriques</span></li>
        <li><span class="side-icon"><svg class="ic w448"><use href="#calculator"/></svg></span><span class="side-label">Formules</span></li>
        <li><span class="side-icon"><svg class="ic w512"><use href="#sliders"/></svg></span><span class="side-label">Variables de paie</span></li>
        <li><span class="side-icon"><svg class="ic w512"><use href="#clock"/></svg></span><span class="side-label">Temps et activités</span></li>
        <li><span class="side-icon"><svg class="ic w640"><use href="#plane"/></svg></span><span class="side-label">Absences et congés</span></li>
        <li><span class="side-icon"><svg class="ic w512"><use href="#gift"/></svg></span><span class="side-label">Primes et indemnités</span></li>
        <li><span class="side-icon"><svg class="ic w512"><use href="#car"/></svg></span><span class="side-label">Avantages en nature</span></li>
      </ul>
    </aside>

    <main class="content">
      <div class="tab-panel">
        <div class="tab-row">
          <a class="tab"><svg class="ic w576"><use href="#gauge"/></svg>Tableau de bord</a>
          <a class="tab"><svg class="ic w448"><use href="#building"/></svg>Établissements</a>
          <a class="tab"><svg class="ic w640"><use href="#sitemap"/></svg>Structures organisationnelles</a>
          <a class="tab"><svg class="ic w512"><use href="#university"/></svg>Organismes</a>
          <a class="tab"><svg class="ic w496"><use href="#globe"/></svg>Packs pays</a>
          <a class="tab"><svg class="ic w448"><use href="#percent"/></svg>Taux et barèmes</a>
          <a class="tab"><svg class="ic w448"><use href="#user"/></svg>Salariés</a>
          <a class="tab"><svg class="ic w576"><use href="#folder"/></svg>Dossiers administratifs</a>
          <a class="tab tab-active"><svg class="ic w576"><use href="#signature"/></svg>Contrats</a>
        </div>
        <div class="tab-row">
          <a class="tab"><svg class="ic w512"><use href="#sync"/></svg>Cycles de paie</a>
          <a class="tab"><svg class="ic w384"><use href="#receipt"/></svg>Bulletins</a>
          <a class="tab"><svg class="ic w512"><use href="#undo"/></svg>Régularisations</a>
          <a class="tab"><svg class="ic w512"><use href="#history"/></svg>Rappels de salaire</a>
          <a class="tab"><svg class="ic w512"><use href="#flag"/></svg>Soldes de tout compte</a>
          <a class="tab"><svg class="ic w576"><use href="#fileexport"/></svg>Déclarations sociales</a>
          <a class="tab"><svg class="ic w512"><use href="#university"/></svg>Paiements et virements</a>
          <a class="tab"><svg class="ic w448"><use href="#book"/></svg>Comptabilisation</a>
        </div>
      </div>

      <div class="page-head">
        <svg class="page-icon"><use href="#appicon"/></svg>
        <span class="page-title">Contrats</span>
        <span class="page-count">(40)</span>
      </div>

      <div class="table-card">
        <table class="data-table">
          <colgroup>
            <col class="col-std"><col class="col-std"><col class="col-std"><col class="col-unit">
            <col class="col-type"><col class="col-std"><col class="col-class"><col class="col-coef"><col class="col-cat">
          </colgroup>
          <thead>
            <tr class="filter-row">
              <th><input class="filter"></th><th><input class="filter"></th><th><input class="filter"></th><th></th>
              <th><input class="filter"></th><th><input class="filter"></th><th></th><th></th><th><input class="filter"></th>
            </tr>
            <tr class="label-row">
              <th>Référence</th><th>Salarié</th><th>Employeur</th><th>Unité d'organisation</th>
              <th>Type de contrat</th><th>Intitulé du poste</th><th class="th-fit">Classification</th><th class="th-fit">Coefficient</th><th>Catégorie de salarié</th>
            </tr>
          </thead>
          <tbody>
            <tr><td><a class="link">CTR-0040</a></td><td><a class="link rec"><svg class="rec-ic"><use href="#recicon"/></svg>MAT-0040</a></td><td><a class="link rec"><svg class="rec-ic"><use href="#recicon"/></svg>EST-001</a></td><td><a class="link rec"><svg class="rec-ic"><use href="#recicon"/></svg>UNIT-009</a></td><td><span class="pill">Contrat permanent (CDI)</span></td><td>Technician</td><td>Position 4</td><td>350</td><td><span class="pill">Technicien</span></td></tr>
            <tr><td><a class="link">CTR-0039</a></td><td><a class="link rec"><svg class="rec-ic"><use href="#recicon"/></svg>MAT-0039</a></td><td><a class="link rec"><svg class="rec-ic"><use href="#recicon"/></svg>EST-003</a></td><td><a class="link rec"><svg class="rec-ic"><use href="#recicon"/></svg>UNIT-006</a></td><td><span class="pill">Apprentissage</span></td><td>Apprentice</td><td>Position 3</td><td>300</td><td><span class="pill">Apprenti</span></td></tr>
            <tr><td><a class="link">CTR-0038</a></td><td><a class="link rec"><svg class="rec-ic"><use href="#recicon"/></svg>MAT-0038</a></td><td><a class="link rec"><svg class="rec-ic"><use href="#recicon"/></svg>EST-002</a></td><td><a class="link rec"><svg class="rec-ic"><use href="#recicon"/></svg>UNIT-003</a></td><td><span class="pill">Stage</span></td><td>Trainee</td><td>Position 2</td><td>250</td><td><span class="pill">Stagiaire</span></td></tr>
            <tr><td><a class="link">CTR-0037</a></td><td><a class="link rec"><svg class="rec-ic"><use href="#recicon"/></svg>MAT-0037</a></td><td><a class="link rec"><svg class="rec-ic"><use href="#recicon"/></svg>EST-001</a></td><td><a class="link rec"><svg class="rec-ic"><use href="#recicon"/></svg>UNIT-010</a></td><td><span class="pill">Temps partiel</span></td><td>Executive</td><td>Position 1</td><td>200</td><td><span class="pill">Cadre</span></td></tr>
            <tr><td><a class="link">CTR-0036</a></td><td><a class="link rec"><svg class="rec-ic"><use href="#recicon"/></svg>MAT-0036</a></td><td><a class="link rec"><svg class="rec-ic"><use href="#recicon"/></svg>EST-003</a></td><td><a class="link rec"><svg class="rec-ic"><use href="#recicon"/></svg>UNIT-007</a></td><td><span class="pill">Stage</span></td><td>Trainee</td><td>Position 4</td><td>450</td><td><span class="pill">Stagiaire</span></td></tr>
            <tr><td><a class="link">CTR-0035</a></td><td><a class="link rec"><svg class="rec-ic"><use href="#recicon"/></svg>MAT-0035</a></td><td><a class="link rec"><svg class="rec-ic"><use href="#recicon"/></svg>EST-002</a></td><td><a class="link rec"><svg class="rec-ic"><use href="#recicon"/></svg>UNIT-004</a></td><td><span class="pill">Contrat permanent (CDI)</span></td><td>Executive</td><td>Position 3</td><td>400</td><td><span class="pill">Cadre</span></td></tr>
            <tr><td><a class="link">CTR-0034</a></td><td><a class="link rec"><svg class="rec-ic"><use href="#recicon"/></svg>MAT-0034</a></td><td><a class="link rec"><svg class="rec-ic"><use href="#recicon"/></svg>EST-001</a></td><td><a class="link rec"><svg class="rec-ic"><use href="#recicon"/></svg>UNIT-001</a></td><td><span class="pill">Contrat à durée déterminée (CDD)</span><span class="cut-dot">·</span></td><td>Noncadre</td><td>Position 2</td><td>350</td><td><span class="pill">Non-cadre</span></td></tr>
            <tr><td><a class="link">CTR-0033</a></td><td><a class="link rec"><svg class="rec-ic"><use href="#recicon"/></svg>MAT-0033</a></td><td><a class="link rec"><svg class="rec-ic"><use href="#recicon"/></svg>EST-003</a></td><td><a class="link rec"><svg class="rec-ic"><use href="#recicon"/></svg>UNIT-008</a></td><td><span class="pill">Contrat permanent (CDI)</span></td><td>Worker</td><td>Position 1</td><td>300</td><td><span class="pill">Ouvrier</span></td></tr>
            <tr><td><a class="link">CTR-0032</a></td><td><a class="link rec"><svg class="rec-ic"><use href="#recicon"/></svg>MAT-0032</a></td><td><a class="link rec"><svg class="rec-ic"><use href="#recicon"/></svg>EST-002</a></td><td><a class="link rec"><svg class="rec-ic"><use href="#recicon"/></svg>UNIT-005</a></td><td><span class="pill">Apprentissage</span></td><td>Apprentice</td><td>Position 4</td><td>250</td><td><span class="pill">Apprenti</span></td></tr>
            <tr><td><a class="link">CTR-0031</a></td><td><a class="link rec"><svg class="rec-ic"><use href="#recicon"/></svg>MAT-0031</a></td><td><a class="link rec"><svg class="rec-ic"><use href="#recicon"/></svg>EST-001</a></td><td><a class="link rec"><svg class="rec-ic"><use href="#recicon"/></svg>UNIT-002</a></td><td><span class="pill">Contrat permanent (CDI)</span></td><td>Technician</td><td>Position 3</td><td>200</td><td><span class="pill">Technicien</span></td></tr>
            <tr><td><a class="link">CTR-0030</a></td><td><a class="link rec"><svg class="rec-ic"><use href="#recicon"/></svg>MAT-0030</a></td><td><a class="link rec"><svg class="rec-ic"><use href="#recicon"/></svg>EST-003</a></td><td><a class="link rec"><svg class="rec-ic"><use href="#recicon"/></svg>UNIT-009</a></td><td><span class="pill">Contrat permanent (CDI)</span></td><td>Expat</td><td>Position 2</td><td>450</td><td><span class="pill">Expatrié</span></td></tr>
            <tr><td><a class="link">CTR-0029</a></td><td><a class="link rec"><svg class="rec-ic"><use href="#recicon"/></svg>MAT-0029</a></td><td><a class="link rec"><svg class="rec-ic"><use href="#recicon"/></svg>EST-002</a></td><td><a class="link rec"><svg class="rec-ic"><use href="#recicon"/></svg>UNIT-006</a></td><td><span class="pill">Contrat permanent (CDI)</span></td><td>Managercat</td><td>Position 1</td><td>400</td><td><span class="pill">Agent de maîtrise</span></td></tr>
            <tr><td><a class="link">CTR-0028</a></td><td><a class="link rec"><svg class="rec-ic"><use href="#recicon"/></svg>MAT-0028</a></td><td><a class="link rec"><svg class="rec-ic"><use href="#recicon"/></svg>EST-001</a></td><td><a class="link rec"><svg class="rec-ic"><use href="#recicon"/></svg>UNIT-003</a></td><td><span class="pill">Temps partiel</span></td><td>Executive</td><td>Position 4</td><td>350</td><td><span class="pill">Cadre</span></td></tr>
          </tbody>
        </table>
      </div>
    </main>
  </div>
</body>
</html>
```

FILE: styles.css
```css
* {
  box-sizing: border-box;
}

html, body {
  height: 100%;
}

body {
  margin: 0;
  height: 1880px;
  overflow: hidden;
  background: white;
  color: #212529;
  font-family: "Liberation Sans", Arial, sans-serif;
  font-size: 30px;
}

.sprite {
  display: block;
  width: 0;
  height: 0;
  overflow: hidden;
}

.ic {
  height: 1em;
  fill: currentColor;
  flex: none;
}

.w640 { width: 1.25em; }
.w576 { width: 1.125em; }
.w512 { width: 1em; }
.w496 { width: 0.969em; }
.w448 { width: 0.875em; }
.w384 { width: 0.75em; }

/* top bar */
.topbar {
  display: flex;
  justify-content: space-between;
  height: 104px;
  background: #2a3c5c;
  color: #e9ecf1;
}

.topnav {
  display: flex;
  padding-left: 10px;
}

.nav-item {
  position: relative;
  display: flex;
  flex-direction: column;
  align-items: center;
  min-width: 132px;
  padding: 20px 12px 0;
  font-size: 26px;
  white-space: nowrap;
}

.nav-icon {
  display: flex;
  justify-content: center;
  align-items: center;
  height: 27px;
  margin-bottom: 15px;
  font-size: 27px;
  color: white;
}

.app-nav {
  width: 40px;
  height: 40px;
  flex: none;
}

.nav-item.active::after {
  content: '';
  position: absolute;
  left: 50%;
  bottom: 0;
  margin-left: -12px;
  border-left: 12px solid transparent;
  border-right: 12px solid transparent;
  border-bottom: 10px solid white;
}

.top-tools {
  display: flex;
  align-items: center;
  padding: 4px 22px 0 0;
  font-size: 26px;
}

.tool-ic {
  width: 33px;
  height: 33px;
  margin-right: 14px;
  fill: white;
}

.tool-print {
  margin-right: 13px;
}

.avatar {
  display: flex;
  justify-content: center;
  align-items: center;
  width: 62px;
  height: 62px;
  margin-left: 13px;
  border: 2px solid rgba(255,255,255,0.25);
  border-radius: 50%;
}

.avatar-ic {
  width: 27px;
  height: 31px;
  fill: white;
}

.username {
  margin-left: 7px;
  color: white;
}

.chevron {
  width: 18px;
  height: 12px;
  margin-left: 15px;
  color: white;
}

/* layout */
.layout {
  display: flex;
  height: 1776px;
}

.sidebar {
  flex: none;
  width: 522px;
  padding: 52px 24px 0 20px;
  background: #f9f9f9;
  border-right: 2px solid #eeeeee;
  overflow: hidden;
}

.side-search {
  display: flex;
  align-items: center;
  height: 76px;
  margin-bottom: 30px;
  padding: 3px 12px 0;
  background: white;
  border: 2px solid #dddddd;
  border-radius: 10px;
}

.search-ic {
  width: 30px;
  height: 30px;
  fill: #aaaaaa;
  flex: none;
}

.search-text {
  flex: 1;
  margin-left: 22px;
  color: #aaaaaa;
}

.search-arrow {
  margin-right: 3px;
  border-left: 8px solid transparent;
  border-right: 8px solid transparent;
  border-top: 10px solid #888888;
}

.side-menu {
  list-style: none;
  margin: 0;
  padding: 0;
}

.side-menu li {
  display: flex;
  align-items: center;
  height: 92.15px;
  padding-left: 16px;
  border-bottom: 2px solid #ececec;
}

.side-icon {
  display: flex;
  flex: none;
  width: 44px;
  font-size: 30px;
  color: #1e3a5f;
}

.side-label {
  overflow: hidden;
  white-space: nowrap;
  text-overflow: ellipsis;
  font-size: 29.3px;
  font-weight: 700;
  letter-spacing: 0.3px;
}

/* main */
.content {
  flex: 1;
  min-width: 0;
  padding: 40px 0 0 88px;
  overflow: hidden;
}

.tab-panel {
  width: max-content;
  padding: 16px 19px 14px;
  background: #f0f5fd;
  border: 3px solid #dfe6f0;
  border-radius: 32px;
}

.tab-row {
  display: flex;
  gap: 1px;
}

.tab-row + .tab-row {
  margin-top: 1px;
}

.tab {
  display: flex;
  align-items: center;
  gap: 12px;
  height: 62px;
  padding: 0 23.2px 3px 24px;
  background: white;
  border: 2px solid #dfe6f0;
  border-radius: 24px;
  color: #1f2d45;
  font-size: 25px;
  white-space: nowrap;
}

.tab .ic {
  color: #1e3a5f;
}

.tab-active {
  background: #1e3a5f;
  border-color: #1e3a5f;
  color: white;
}

.tab-active .ic {
  color: white;
}

.page-head {
  display: flex;
  align-items: center;
  margin: 59px 0 53px 6px;
}

.page-icon {
  width: 61px;
  height: 61px;
  flex: none;
}

.page-title {
  margin-left: 23px;
  color: #5f6f70;
  font-size: 33px;
}

.page-count {
  margin: 3px 0 0 21px;
  color: #888888;
  font-size: 29px;
}

/* table */
.table-card {
  border-top: 2px solid #dddddd;
  border-left: 2px solid #dddddd;
  border-top-left-radius: 16px;
  overflow: hidden;
}

.data-table {
  width: 2471px;
  table-layout: fixed;
  border-collapse: collapse;
}

.col-std { width: 244px; }
.col-unit { width: 245px; }
.col-type { width: 443px; }
.col-class { width: 222px; }
.col-coef { width: 185px; }
.col-cat { width: 400px; }

.data-table th,
.data-table td {
  padding: 0 24px;
  text-align: left;
  white-space: nowrap;
}

.data-table thead {
  background: #f0f0f3;
}

.filter-row th {
  height: 88px;
  padding-top: 18px;
  vertical-align: top;
}

.filter {
  display: block;
  width: 196px;
  height: 52px;
  margin-left: 2px;
  border: none;
  border-radius: 8px;
  background: white;
}

.label-row th {
  height: 80px;
  padding-bottom: 10px;
  border-bottom: 2px solid #dddddd;
  color: #4a5290;
  font-weight: 400;
  overflow: hidden;
  text-overflow: ellipsis;
}

.data-table .th-fit {
  padding-right: 10px;
}

.data-table td {
  height: 98px;
  padding-top: 4px;
  border-bottom: 2px solid #f0f0f0;
}

.data-table tbody tr:nth-child(odd) {
  background: #fcfcfd;
}

.link {
  color: #0a1a6b;
}

.rec {
  display: flex;
  align-items: center;
}

.rec-ic {
  width: 32px;
  height: 32px;
  margin: 3px 16px 0 1px;
  flex: none;
}

.pill {
  display: inline-block;
  height: 57px;
  margin-bottom: 2px;
  padding: 0 18.5px;
  background: #eef2f7;
  border: 2px solid #dbe4ee;
  border-radius: 29px;
  color: #1a2b45;
  font-size: 22.4px;
  font-weight: 700;
  line-height: 50px;
  letter-spacing: 0.3px;
}

.cut-dot {
  margin-left: 5px;
  font-size: 22px;
  vertical-align: 5px;
}
```
